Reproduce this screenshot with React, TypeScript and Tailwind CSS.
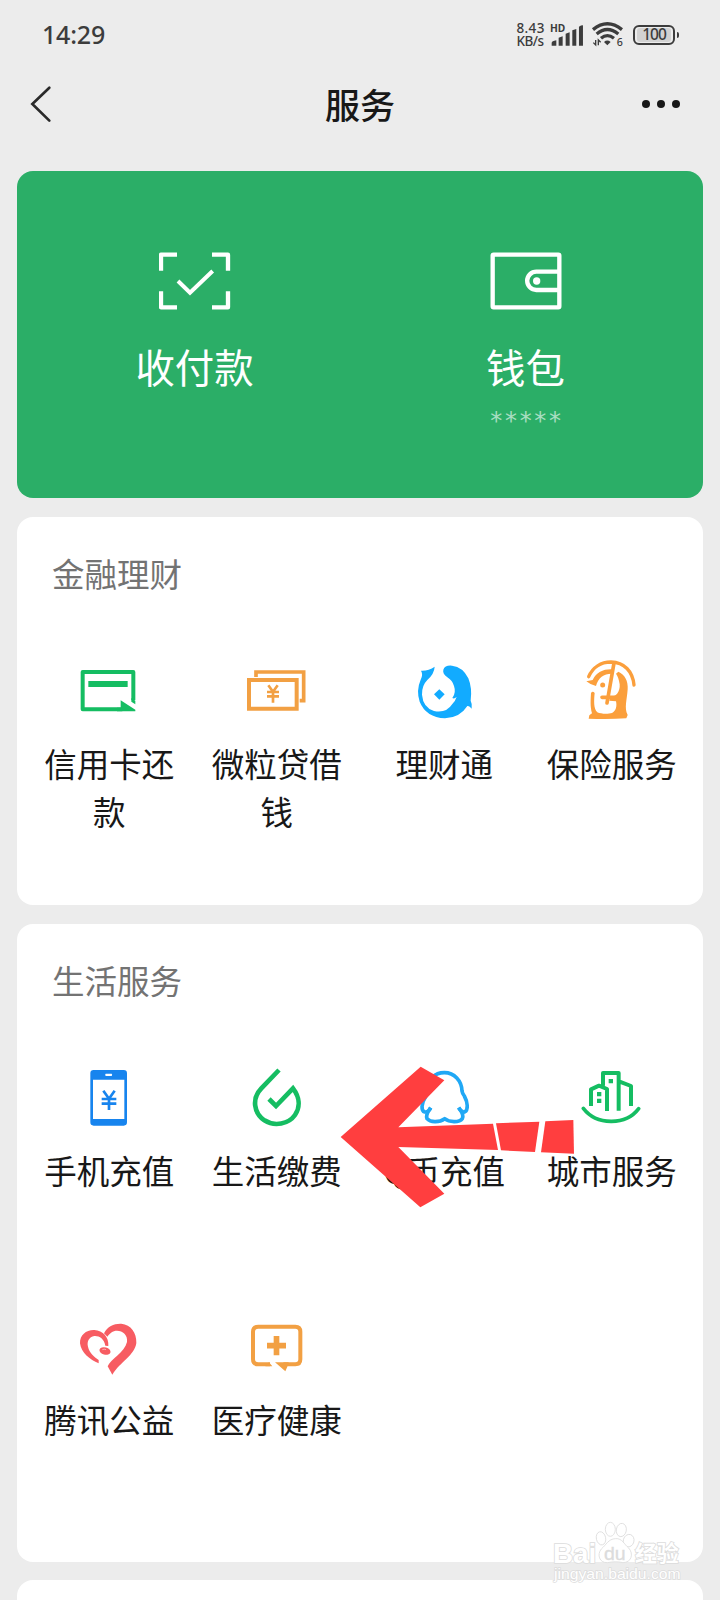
import React from "react";

type Service = {
  label: string;
  icon: React.ReactNode;
};

const GREEN = "#15bd62";
const ORANGE = "#f2a043";

const CreditCardIcon = () => (
  <svg viewBox="236 480 180 180" className="h-[60px] w-[60px]" fill="none">
    <path d="M399 600V516H247V628H366" stroke={GREEN} strokeWidth="12" strokeLinejoin="round" />
    <path d="M264 543H382V561H264Z" fill={GREEN} />
    <path d="M361 601L405 629V634H350V623H361Z" fill={GREEN} />
    <path d="M393 594L405 602V613L393 605Z" fill={GREEN} />
  </svg>
);

const LoanIcon = () => (
  <svg viewBox="739 480 180 180" className="h-[60px] w-[60px]" fill="none" stroke={ORANGE}>
    <path d="M748 540H891V626H748Z" strokeWidth="12" />
    <path d="M769 531V516H912V602H900" strokeWidth="11" />
    <path d="M806 556L820 575L834 556M802 576H838M802 589H838M820 574V608" strokeWidth="8" />
  </svg>
);

const WealthIcon = () => (
  <svg viewBox="132 60 180 180" className="h-[60px] w-[60px]" fill="#12abff">
    <path d="M153 92Q176 93 194 80Q193 101 172 120Q155 137 156 164Q159 202 192 213Q228 221 247 192Q256 183 260 170Q253 178 247 174Q259 158 252 138Q247 121 232 112Q217 101 220 89Q225 75 246 77Q279 81 295 115Q307 144 302 182Q307 191 305 206Q298 196 292 198Q270 233 225 235Q168 232 149 185Q138 151 152 119Q160 103 153 92Z" />
    <path d="M208 148L224 163L208 179L192 163Z" />
  </svg>
);

const InsuranceIcon = () => (
  <svg viewBox="35 31 180 180" className="h-[60px] w-[60px]" fill="#fb9f3c">
    <path d="M58 81C70 53 95 37 125 37C165 38 190 65 194 106" fill="none" stroke="#fb9f3c" strokeWidth="10" strokeLinecap="round" />
    <path d="M51 95L70 91C82 67 102 58 128 59L126 72C104 72 86 84 80 109Q64 106 51 95Z" />
    <path d="M147 66C166 74 177 94 175 119C173 150 164 176 175 196L171 206Q115 210 58 207L60 197L68 191C62 170 64 148 65 130Q70 123 76 130C74 150 72 178 84 188C94 193 116 194 128 190C141 184 143 168 140 155L120 153L122 143C140 142 153 126 151 104C149 89 145 79 140 72Z" />
    <path d="M134 40L113 160M98 143H141" fill="none" stroke="#fb9f3c" strokeWidth="11" strokeLinecap="round" />
    <circle cx="100" cy="106" r="7.5" />
  </svg>
);

const PhoneIcon = () => (
  <svg viewBox="177 81 180 180" className="h-[60px] w-[60px]">
    <path fillRule="evenodd" d="M221 90H311Q321 90 321 100V247Q321 257 311 257H221Q211 257 211 247V100Q211 90 221 90ZM219 119V237H313V119ZM257 101Q254 104 257 108H275Q278 104 275 101Z" fill="#1784ee" />
    <path d="M250 152L267 176L284 152M245 177H289M245 191H289M267 175V210" fill="none" stroke="#1784ee" strokeWidth="8" />
  </svg>
);

const UtilitiesIcon = () => (
  <svg viewBox="678 81 180 180" className="h-[60px] w-[60px]" fill="none">
    <path d="M777 90L724 145C694 176 702 220 733 241C764 261 806 252 825 225C842 200 838 170 819 145L768 198L747 177" stroke={GREEN} strokeWidth="14" />
  </svg>
);

const CoinIcon = () => (
  <svg viewBox="281 81 180 180" className="h-[60px] w-[60px]" fill="none" stroke="#20a8f5" strokeWidth="11" strokeLinejoin="round">
    <path d="M331 203Q325 217 313 216C302 213 302 190 316 170Q321 163 321 150C322 118 343 98 372 98C402 98 424 122 425 153Q426 160 432 168C443 188 444 210 433 216Q423 218 415 203" />
    <path d="M331 203Q315 225 320 236C331 249 358 247 373 236C387 247 416 249 426 236Q432 225 415 203" />
  </svg>
);

const CityIcon = () => (
  <svg viewBox="784 81 180 180" className="h-[60px] w-[60px]" fill="none" stroke={GREEN}>
    <path d="M814 198V148L838 137L862 147V213M850 137V99H897V212M898 124L934 138V198" strokeWidth="12" strokeLinejoin="round" />
    <path d="M791 205C830 256 918 258 957 206" strokeWidth="11" strokeLinecap="round" />
    <path d="M832 156H845V169H832ZM832 176H845V189H832ZM867 117H880V130H867Z" fill={GREEN} stroke="none" />
  </svg>
);

const CharityIcon = () => (
  <svg viewBox="177 48 180 180" className="h-[60px] w-[60px]" fill="#f75c62">
    <path d="M236 190C210 180 183 157 180 130C179 105 199 89 223 90C249 92 267 111 265 138L256 137C252 116 238 107 223 108C207 111 200 124 204 140C208 158 222 170 236 180Z" />
    <path d="M252 100C263 78 283 70 304 71C333 74 350 98 349 129C344 166 302 184 277 224L263 199C271 178 314 157 321 126C324 105 308 92 291 92C278 92 269 100 262 110Z" />
    <ellipse cx="255" cy="153" rx="17" ry="11" transform="rotate(16 255 153)" />
    <path d="M247 149Q253 146 258 149" fill="none" stroke="#fff" strokeWidth="1.500" />
  </svg>
);

const HealthIcon = () => (
  <svg viewBox="678 48 180 180" className="h-[60px] w-[60px]" fill="none">
    <path d="M750 193H715Q699 193 699 178V95Q699 80 715 80H826Q841 80 841 95V178Q841 193 826 193H790" stroke={ORANGE} strokeWidth="12" />
    <path d="M747 187L757 199H736ZM765 187H806L802 200L796 214Z" fill={ORANGE} />
    <path d="M741 137H798M769.500 108V166" stroke={ORANGE} strokeWidth="17" />
  </svg>
);

const financeServices: Service[] = [
  { label: "信用卡还款", icon: <CreditCardIcon /> },
  { label: "微粒贷借钱", icon: <LoanIcon /> },
  { label: "理财通", icon: <WealthIcon /> },
  { label: "保险服务", icon: <InsuranceIcon /> },
];

const lifeServices: Service[] = [
  { label: "手机充值", icon: <PhoneIcon /> },
  { label: "生活缴费", icon: <UtilitiesIcon /> },
  { label: "Q币充值", icon: <CoinIcon /> },
  { label: "城市服务", icon: <CityIcon /> },
  { label: "腾讯公益", icon: <CharityIcon /> },
  { label: "医疗健康", icon: <HealthIcon /> },
];

const StatusBar: React.FC = () => (
  <div className="flex h-[70px] items-center justify-between pl-[42px] pr-[41px] text-[#3c3c3c]">
    <span className="-mt-[2px] font-['Noto_Sans'] text-[25px] font-medium leading-none tracking-[-0.2px]">14:29</span>
    <div className="flex items-center">
      <div className="w-[34px] whitespace-nowrap font-['Noto_Sans'] text-[13.500px] font-medium leading-[12.500px]">
        <div className="tracking-[0.4px]">8.43</div>
        <div className="tracking-[-0.500px]">KB/s</div>
      </div>
      <svg viewBox="150 68 100 72" className="h-[24px] w-[33.300px] overflow-visible" fill="#3c3c3c">
        <text x="150" y="95" fontSize="31" fontWeight="700" fontFamily="Noto Sans" textLength="46" lengthAdjust="spacingAndGlyphs">HD</text>
        <path d="M155 136V128Q155 122 169 120V136ZM176 136V112L188 108V136ZM197 136V100L209 96V136ZM217 136V90L229 86V136ZM237 136V79Q243 75 249 75V136Z" />
      </svg>
      <svg viewBox="272 68 100 76" className="ml-[7px] h-[25.300px] w-[33.300px] overflow-visible" fill="none" stroke="#3c3c3c">
        <path d="M278 91Q321 56 365 91M289 104Q321 77 354 104M302 117Q321 101 341 117" strokeWidth="10" />
        <path d="M311 128Q321 119 331 128L321 138Z" fill="#3c3c3c" stroke="none" />
        <path d="M286 122V137L279 130M294 138V122L301 129" strokeWidth="4" />
        <text x="349" y="139" fontSize="32" fontFamily="Noto Sans" fontWeight="500" fill="#3c3c3c" stroke="none">6</text>
      </svg>
      <div className="ml-[9px] flex h-[20px] w-[42px] items-center justify-center rounded-[6px] border-2 border-[#3c3c3c]">
        <span className="flex h-[14px] w-[34px] items-center justify-center rounded-[3px] bg-[#d2d2d2] pb-px font-['Noto_Sans'] text-[15.500px] font-medium leading-none tracking-[-1px]">
          100
        </span>
      </div>
      <div className="ml-[2px] h-[6px] w-[2px] rounded-r bg-[#3c3c3c]" />
    </div>
  </div>
);

const NavBar: React.FC = () => (
  <div className="flex h-[101px] items-start justify-between pl-[30px] pr-[40px]">
    <svg viewBox="90 255 66 114" className="mt-[15px] h-[38px] w-[22px]" fill="none">
      <path d="M148 263L97 312L148 362" stroke="#2a2a2a" strokeWidth="8" strokeLinecap="round" />
    </svg>
    <h1 className="ml-[26px] mt-[10px] text-[35px] font-medium leading-[48px] text-[#181818]">服务</h1>
    <div className="mt-[30px] flex gap-[7px]">
      <span className="h-2 w-2 rounded-full bg-[#181818]" />
      <span className="h-2 w-2 rounded-full bg-[#181818]" />
      <span className="h-2 w-2 rounded-full bg-[#181818]" />
    </div>
  </div>
);

const PayCard: React.FC = () => (
  <div className="grid h-[327px] grid-cols-2 rounded-2xl bg-[#2bae67] px-3 text-white">
    <div className="flex flex-col items-center pt-[81px]">
      <svg viewBox="117 66 216 174" className="h-[58px] w-[72px]" fill="none" stroke="#fff" strokeWidth="13">
        <path d="M171 74H123V122M276 74H324V122M123 184V232H171M324 184V232H276" strokeLinejoin="round" />
        <path d="M174 153L210 188L278 123" strokeWidth="12" />
      </svg>
      <span className="mt-[28px] text-[39.400px] leading-[56px]">收付款</span>
    </div>
    <div className="flex flex-col items-center pt-[81px]">
      <svg viewBox="149 66 216 174" className="h-[58px] w-[72px]" fill="none" stroke="#fff" strokeWidth="13">
        <rect x="157" y="74" width="200" height="158" rx="3" />
        <path d="M357 125H288A27.500 27.500 0 0 0 288 180H357" />
        <circle cx="289" cy="153" r="11" fill="#fff" stroke="none" />
      </svg>
      <span className="mt-[28px] text-[39.400px] leading-[56px]">钱包</span>
      <span className="mt-[13px] pl-[3px] font-['DejaVu_Sans'] text-[24px] leading-7 tracking-[2.700px] text-white/60">*****</span>
    </div>
  </div>
);

const ServiceCard: React.FC<{ title: string; services: Service[]; className: string }> = ({
  title,
  services,
  className,
}) => (
  <section className={`rounded-2xl bg-white px-2 pt-[32px] ${className}`}>
    <h2 className="pl-[27px] text-[32.500px] leading-[48px] text-[#737373]">{title}</h2>
    <div className="mt-[63px] grid auto-rows-[249px] grid-cols-4">
      {services.map((service) => (
        <div key={service.label} className="flex flex-col items-center">
          {service.icon}
          <span className="ml-px mt-[18.500px] w-[132px] break-all text-center text-[32.500px] leading-[48.500px] text-[#181818]">
            {service.label}
          </span>
        </div>
      ))}
    </div>
  </section>
);

const Arrow: React.FC = () => (
  <svg viewBox="60 78 705 426" className="absolute left-[340px] top-[1066px] h-[142px] w-[235px]" fill="#ff3e3f">
    <path d="M62 291L302 80L373 121L235 262L519 251L534 330L235 321L373 461L301 502Z" />
    <path d="M528 250L658 245L645 336L543 331Z" />
    <path d="M676 244L760 240L762 341L663 337Z" />
  </svg>
);

const Watermark: React.FC = () => (
  <svg
    viewBox="96 62 390 190"
    className="absolute left-[552px] top-[1520.500px] h-[63.300px] w-[130px]"
    fill="#fff"
    stroke="#dcdcdc"
    strokeWidth="2.500"
  >
    <g style={{ paintOrder: "stroke" }} strokeWidth="5">
      <text x="99" y="187" fontSize="84" fontWeight="700" fontFamily="Liberation Sans" textLength="130" lengthAdjust="spacingAndGlyphs">Bai</text>
      <text x="345" y="181" fontSize="66" fontWeight="700" fontFamily="Noto Sans CJK SC" textLength="131">经验</text>
    </g>
    <ellipse cx="243" cy="114" rx="14" ry="20" transform="rotate(-12 243 114)" />
    <ellipse cx="271" cy="87" rx="15" ry="21" />
    <ellipse cx="304" cy="89" rx="15" ry="20" transform="rotate(10 304 89)" />
    <ellipse cx="326" cy="121" rx="16" ry="19" transform="rotate(15 326 121)" />
    <path d="M286 115C307 113 312 132 326 143C342 161 334 187 309 187C291 183 280 184 262 187C238 188 230 163 244 146C258 134 265 116 286 115Z" />
    <text x="252" y="179" fontSize="55" fontWeight="400" fontFamily="Liberation Sans" fill="#dcdcdc" strokeWidth="1" textLength="65" lengthAdjust="spacingAndGlyphs">du</text>
    <text x="102" y="237" fontSize="42" fontFamily="Liberation Sans" style={{ paintOrder: "stroke" }} strokeWidth="4" textLength="380" lengthAdjust="spacingAndGlyphs">jingyan.baidu.com</text>
  </svg>
);

const App: React.FC = () => {
  return (
    <div className="relative h-[1600px] w-[720px] overflow-hidden bg-[#ececec] font-['Noto_Sans_CJK_SC',sans-serif]">
      <StatusBar />
      <NavBar />
      <main className="flex flex-col px-[17px]">
        <PayCard />
        <ServiceCard title="金融理财" services={financeServices} className="mt-[19px] h-[388px]" />
        <ServiceCard title="生活服务" services={lifeServices} className="mt-[19px] h-[638px]" />
        <div className="mt-[18px] h-[60px] rounded-2xl bg-white" />
      </main>
      <Arrow />
      <Watermark />
    </div>
  );
};

export default App;
